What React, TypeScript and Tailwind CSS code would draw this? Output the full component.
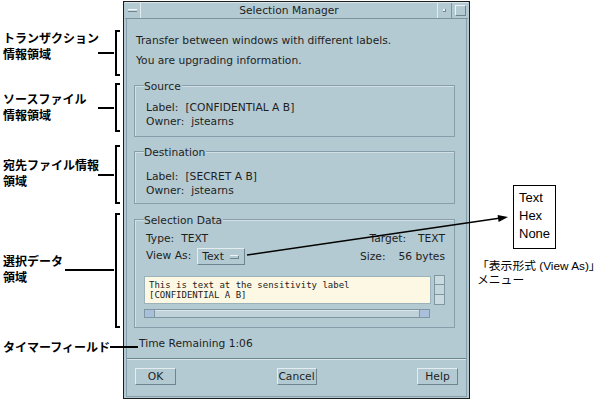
import React from "react";

function Group({
  title,
  className,
  children,
}: {
  title: string;
  className: string;
  children: React.ReactNode;
}) {
  return (
    <div
      className={`ml-[7px] mr-[11px] border border-[#869faa] shadow-[inset_1px_1px_0_#d2e0e5] px-[9px] ${className}`}
    >
      <div className="-mt-[6px] leading-[14px]">
        <span className="bg-[#b4cad2] pr-[1px]">{title}</span>
      </div>
      {children}
    </div>
  );
}

function Row({ label, value, className = "" }: { label: string; value: string; className?: string }) {
  return (
    <div className={`flex gap-[7px] pl-[2px] leading-[14px] ${className}`}>
      <span>{label}</span>
      <span>{value}</span>
    </div>
  );
}

function Button({ label, w }: { label: string; w: string }) {
  return (
    <div
      className={`${w} h-[17px] border border-t-[#e4edf0] border-l-[#e4edf0] border-b-[#6c8590] border-r-[#6c8590] text-center leading-[15px]`}
    >
      {label}
    </div>
  );
}

function Window() {
  return (
    <div className="w-[347px] h-[398px] border border-[#1c1c1c] bg-[#b4cad2] px-px pb-px flex flex-col text-[#1e1e1e] font-['DejaVu_Sans',sans-serif] text-[10.7px]">
      {/* title bar */}
      <div className="h-[17px] flex border-t border-b border-t-[#dbe6ea] border-b-[#7b949e]">
        <div className="w-[16px] border-r border-r-[#e2ecef] flex items-center justify-center">
          <div className="w-[9px] h-[3px] border-t border-b border-t-[#f0f5f6] border-b-[#6c8590] bg-[#c7d8de]" />
        </div>
        <div className="flex-1 text-center leading-[15px]">Selection Manager</div>
        <div className="w-[15px] border-l border-r border-l-[#e2ecef] border-r-[#7b949e] flex items-center justify-center">
          <div className="w-[3px] h-[3px] bg-[#eef4f6] border-b border-r border-[#6c8590]" />
        </div>
        <div className="w-[16px] flex items-center justify-center">
          <div className="w-[11px] h-[11px] border border-t-[#eef4f6] border-l-[#eef4f6] border-b-[#6c8590] border-r-[#6c8590]" />
        </div>
      </div>

      {/* body */}
      <div className="flex-1 mx-px border-l border-r border-b border-[#869faa] flex flex-col">
        <p className="mt-[12px] pl-[9px] leading-[20px]">Transfer between windows with different labels.</p>
        <p className="pl-[9px] leading-[20px]">You are upgrading information.</p>

        <Group title="Source" className="mt-[14px] pb-[7px]">
          <Row label="Label:" value="[CONFIDENTIAL A B]" className="mt-[7px]" />
          <Row label="Owner:" value="jstearns" />
        </Group>

        <Group title="Destination" className="mt-[14px] pb-[5px]">
          <Row label="Label:" value="[SECRET A B]" className="mt-[10px]" />
          <Row label="Owner:" value="jstearns" />
        </Group>

        <Group title="Selection Data" className="mt-[15px] pb-[9px]">
          <div className="mt-[4px] flex justify-between leading-[14px]">
            <div className="flex gap-[7px] pl-[2px]">
              <span>Type:</span>
              <span>TEXT</span>
            </div>
            <div className="flex gap-[12px]">
              <span>Target:</span>
              <span>TEXT</span>
            </div>
          </div>
          <div className="mt-[2px] flex justify-between items-center">
            <div className="flex items-center gap-[6px] pl-[2px]">
              <span>View As:</span>
              <div className="w-[48px] h-[17px] border border-t-[#e4edf0] border-l-[#e4edf0] border-b-[#6c8590] border-r-[#6c8590] flex items-center pl-[4px] gap-[6px] leading-[15px]">
                <span>Text</span>
                <div className="w-[9px] h-[4px] border-t border-r border-t-[#eef4f6] border-r-[#6c8590] border-b border-b-[#6c8590]" />
              </div>
            </div>
            <div className="flex gap-[13px] leading-[14px]">
              <span>Size:</span>
              <span>56 bytes</span>
            </div>
          </div>

          <div className="mt-[10px] flex items-start gap-[3px]">
            <div className="mt-px flex-1 h-[28px] bg-[#fdf8e3] border border-[#9cb2bb] pl-[4px] pt-[3px] font-['DejaVu_Sans_Mono',monospace] text-[9px] leading-[10px] text-[#222] whitespace-pre">
              {"This is text at the sensitivity label\n[CONFIDENTIAL A B]"}
            </div>
            <div className="w-[11px] h-[30px] border border-[#7e97a1] bg-[#bdd1d8] flex flex-col">
              <div className="h-[9px] border-b border-[#7e97a1] bg-[#c9dbe1]" />
              <div className="flex-1 border-b border-[#7e97a1] bg-[#c4d7dd]" />
              <div className="h-[9px] bg-[#c9dbe1]" />
            </div>
          </div>

          <div className="mt-[4px] w-[286px] h-[9px] border border-[#7e97a1] bg-[#bfd2d9] flex">
            <div className="w-[10px] bg-[#a9bfdc] border-r border-[#7e97a1]" />
            <div className="flex-1 border-t border-[#dbe6ea]" />
            <div className="w-[10px] bg-[#a9bfdc] border-l border-[#7e97a1]" />
          </div>
        </Group>

        <p className="mt-[9px] pl-[12px] leading-[14px]">Time Remaining 1:06</p>

        <div className="mt-[7px] h-[2px] border-t border-b border-t-[#6c8590] border-b-[#dbe6ea]" />

        <div className="mt-[8px] px-[8px] flex justify-between">
          <Button label="OK" w="w-[41px]" />
          <Button label="Cancel" w="w-[40px]" />
          <Button label="Help" w="w-[41px]" />
        </div>
      </div>
    </div>
  );
}

function Bracket({ top, h }: { top: string; h: string }) {
  return <div className={`absolute left-[115px] ${top} ${h} w-[5px] border-l-2 border-t-2 border-b-2 border-black`} />;
}

function Leader({ cls }: { cls: string }) {
  return <div className={`absolute h-[2px] bg-black ${cls}`} />;
}

function Note({ top, children }: { top: string; children: React.ReactNode }) {
  return (
    <div
      className={`absolute left-[3px] ${top} leading-[16px] whitespace-nowrap text-[12px] font-bold text-black font-['Noto_Sans_CJK_JP',sans-serif]`}
    >
      {children}
    </div>
  );
}

function Annotations() {
  return (
    <>
      <Note top="top-[30px]">
        トランザクション
        <br />
        情報領域
      </Note>
      <Note top="top-[91px]">
        ソースファイル
        <br />
        情報領域
      </Note>
      <Note top="top-[157px]">
        宛先ファイル情報
        <br />
        領域
      </Note>
      <Note top="top-[253px]">
        選択データ
        <br />
        領域
      </Note>
      <Note top="top-[339px]">タイマーフィールド</Note>

      <Bracket top="top-[30px]" h="h-[46px]" />
      <Bracket top="top-[83px]" h="h-[49px]" />
      <Bracket top="top-[145px]" h="h-[59px]" />
      <Bracket top="top-[213px]" h="h-[115px]" />

      <Leader cls="left-[98px] w-[16px] top-[52px]" />
      <Leader cls="left-[98px] w-[16px] top-[107px]" />
      <Leader cls="left-[98px] w-[16px] top-[174px]" />
      <Leader cls="left-[65px] w-[49px] top-[269px]" />
      <Leader cls="left-[110px] w-[28px] top-[346px]" />

      <svg className="absolute left-0 top-0 pointer-events-none" width="605" height="401">
        <line x1="247" y1="255" x2="499" y2="218.3" stroke="#000" strokeWidth="1.6" />
        <polygon points="508,217 498.6,221.9 497.6,215" fill="#000" />
      </svg>

      <div className="absolute left-[513px] top-[185px] w-[43px] h-[64px] border border-black bg-white pl-[5px] pt-[3px] text-[13px] leading-[18px] text-black font-['Liberation_Sans',Arial,sans-serif]">
        <div>Text</div>
        <div>Hex</div>
        <div>None</div>
      </div>

      <div className="absolute left-[477px] top-[259px] text-[11.8px] leading-[14px] text-black whitespace-nowrap font-['Liberation_Sans','Noto_Sans_CJK_JP',sans-serif]">
        「表示形式 (View As)」
        <br />
        メニュー
      </div>
    </>
  );
}

export default function App() {
  return (
    <div className="relative w-[605px] h-[401px] overflow-hidden bg-white">
      <div className="ml-[123px] pt-px">
        <Window />
      </div>
      <Annotations />
    </div>
  );
}
